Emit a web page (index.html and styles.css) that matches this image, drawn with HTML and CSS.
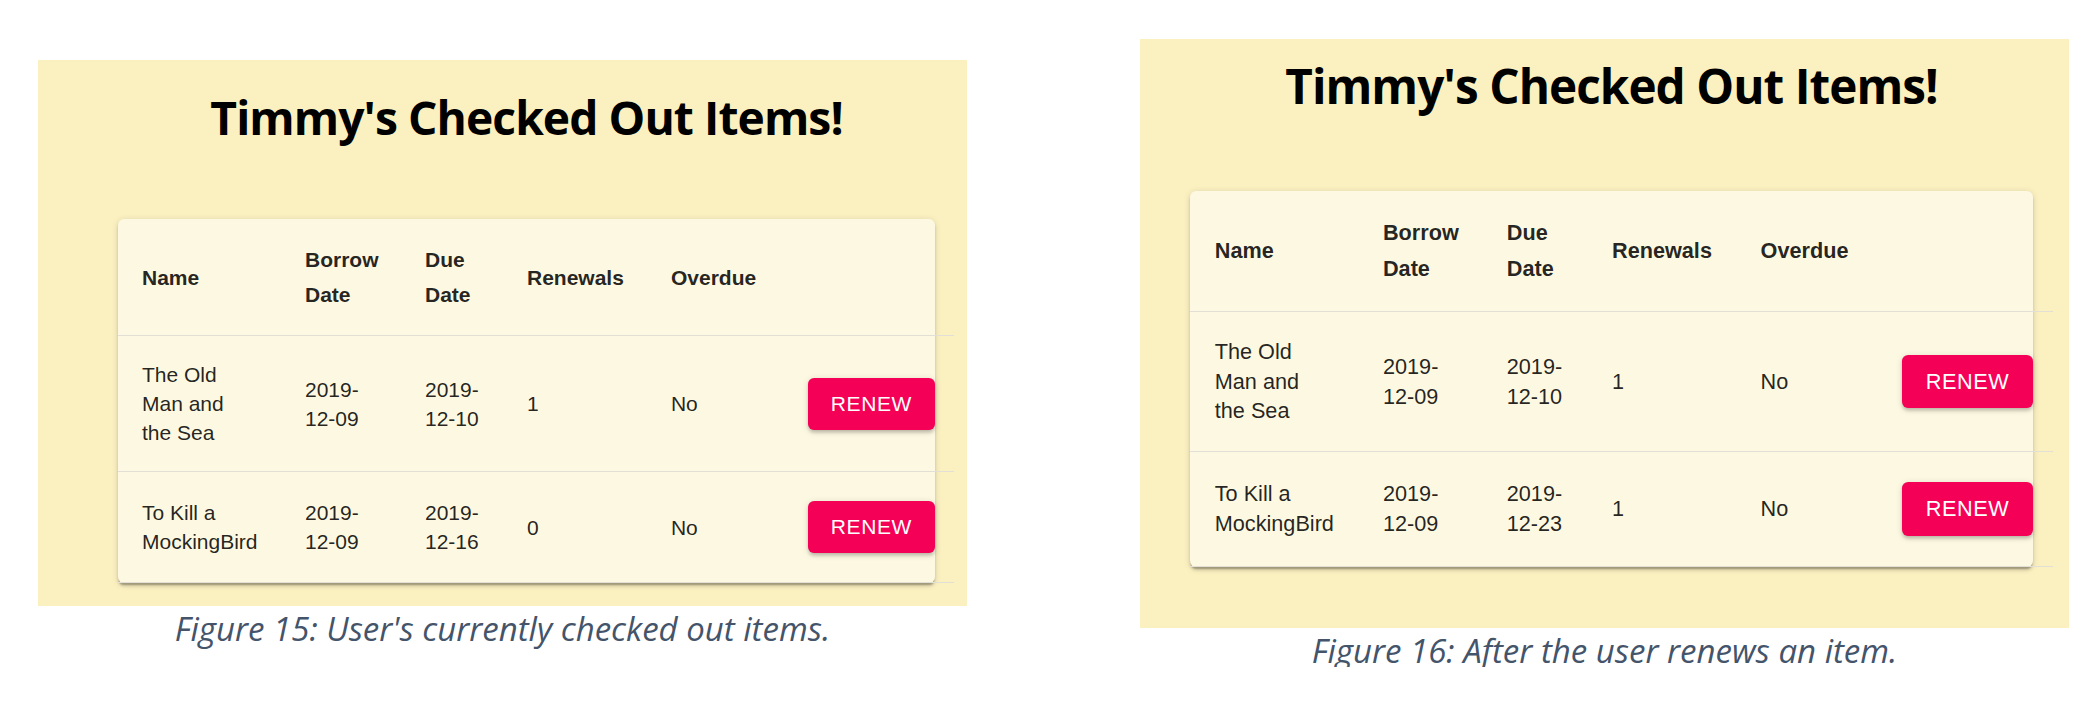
FILE: index.html
```html
<!DOCTYPE html>
<html lang="en">
<head>
<meta charset="utf-8">
<title>Timmy's Checked Out Items</title>
<link rel="stylesheet" href="styles.css">
</head>
<body>
<main class="page">
  <figure class="fig fig-15">
    <div class="panel">
      <div class="content">
        <h1 class="title">Timmy's Checked Out Items!</h1>
        <div class="card">
          <table class="items">
            <thead>
              <tr class="head-row">
                <th>Name</th><th>Borrow Date</th><th>Due Date</th><th>Renewals</th><th>Overdue</th><th class="action"></th>
              </tr>
            </thead>
            <tbody>
              <tr class="row row-a">
                <td>The Old Man and the Sea</td><td>2019-12-09</td><td>2019-12-10</td><td>1</td><td>No</td>
                <td class="action"><button class="renew" type="button">RENEW</button></td>
              </tr>
              <tr class="row row-b">
                <td>To Kill a MockingBird</td><td>2019-12-09</td><td>2019-12-16</td><td>0</td><td>No</td>
                <td class="action"><button class="renew" type="button">RENEW</button></td>
              </tr>
            </tbody>
          </table>
        </div>
      </div>
    </div>
    <figcaption class="caption">Figure 15: User's currently checked out items.</figcaption>
  </figure>

  <figure class="fig fig-16">
    <div class="panel">
      <div class="content">
        <h1 class="title">Timmy's Checked Out Items!</h1>
        <div class="card">
          <table class="items">
            <thead>
              <tr class="head-row">
                <th>Name</th><th>Borrow Date</th><th>Due Date</th><th>Renewals</th><th>Overdue</th><th class="action"></th>
              </tr>
            </thead>
            <tbody>
              <tr class="row row-a">
                <td>The Old Man and the Sea</td><td>2019-12-09</td><td>2019-12-10</td><td>1</td><td>No</td>
                <td class="action"><button class="renew" type="button">RENEW</button></td>
              </tr>
              <tr class="row row-b">
                <td>To Kill a MockingBird</td><td>2019-12-09</td><td>2019-12-23</td><td>1</td><td>No</td>
                <td class="action"><button class="renew" type="button">RENEW</button></td>
              </tr>
            </tbody>
          </table>
        </div>
      </div>
    </div>
    <figcaption class="caption">Figure 16: After the user renews an item.</figcaption>
  </figure>
</main>
</body>
</html>
```

FILE: styles.css
```css
* {
  box-sizing: border-box;
}

html,
body {
  margin: 0;
  background: #ffffff;
}

.page {
  display: flex;
  align-items: flex-start;
  gap: 173px;
  padding-left: 38px;
}

.fig {
  margin: 0;
  width: 929px;
  flex: none;
}

.fig-15 {
  margin-top: 60px;
  font-size: 21px;
}

.fig-16 {
  margin-top: 39px;
  font-size: 21.67px;
}

.panel {
  background: #fbf0c0;
}

.fig-15 .panel {
  height: 546px;
  padding-top: 35px;
  padding-left: 80px;
}

.fig-16 .panel {
  height: 589px;
  padding-top: 23px;
  padding-left: 50px;
}

.content {
  width: 38.905em;
}

.title {
  margin: 0;
  font-family: "Open Sans", "Noto Sans", sans-serif;
  font-weight: 700;
  font-size: 2.2em;
  letter-spacing: -0.02em;
  line-height: 1;
  text-align: center;
  color: #000000;
}

.card {
  background: #fdf8e1;
  border-radius: 0.286em;
  box-shadow: 0 3px 1.5px -1.5px rgba(0, 0, 0, 0.2),
              0 3px 3px 0 rgba(0, 0, 0, 0.14),
              0 1.5px 7.5px 0 rgba(0, 0, 0, 0.12);
}

.fig-15 .card {
  margin-top: 78px;
}

.fig-16 .card {
  margin-top: 81.5px;
}

.items {
  display: block;
  width: 39.81em;
  border-collapse: collapse;
  font-family: "Liberation Sans", Arial, sans-serif;
  color: rgba(0, 0, 0, 0.87);
}

.items thead,
.items tbody {
  display: block;
}

.items tr {
  display: grid;
  grid-template-columns: 7.762em 5.714em 4.857em 6.857em 6.524em 8.095em;
  align-items: center;
  border-bottom: 1px solid #e2e0d6;
}

.items th,
.items td {
  display: block;
  padding: 0 0.762em 0 1.143em;
  text-align: left;
  font-size: 1em;
}

.items th:first-child,
.items td:first-child {
  padding-right: 2em;
}

.items th {
  font-weight: 700;
}

.head-row {
  padding: 1.095em 0;
  line-height: 1.667em;
}

.row {
  line-height: 1.381em;
}

.row-a {
  padding: 1.143em 0;
}

.row-b {
  padding: 1.238em 0;
}

.items .action {
  padding-right: 0.905em;
}

.renew {
  display: block;
  width: 6.048em;
  height: 2.476em;
  padding: 0;
  border: 0;
  border-radius: 0.286em;
  background: #f50057;
  color: #ffffff;
  font-family: "Liberation Sans", Arial, sans-serif;
  font-size: 1em;
  line-height: 2.476em;
  letter-spacing: 0.02857em;
  text-align: center;
  box-shadow: 0 3px 1.5px -3px rgba(0, 0, 0, 0.2),
              0 3px 3px 0 rgba(0, 0, 0, 0.14),
              0 1.5px 7.5px 0 rgba(0, 0, 0, 0.12);
}

.caption {
  margin-top: 6px;
  font-family: "Open Sans", "Noto Sans", sans-serif;
  font-style: italic;
  font-size: 33px;
  line-height: 1;
  text-align: center;
  color: #44546a;
}
```
